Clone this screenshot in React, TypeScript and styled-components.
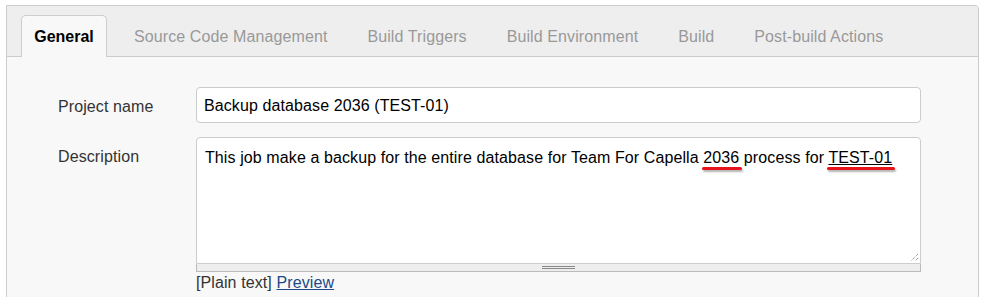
import React from "react";
import styled, { createGlobalStyle } from "styled-components";

const GlobalStyle = createGlobalStyle`
   html, body {
      margin: 0;
      padding: 0;
      background: #ffffff;
      font-family: "Liberation Sans", Arial, sans-serif;
      font-size: 16px;
      letter-spacing: 0.1px;
      color: #333;
   }
`;

const tabs = ["General", "Source Code Management", "Build Triggers", "Build Environment", "Build", "Post-build Actions"];

function App() {
   return (
      <>
         <GlobalStyle />
         <Panel>
            <TabBar>
               {tabs.map((item, index) => (
                  <Tab key={index} $active={index == 0}>
                     {item}
                  </Tab>
               ))}
            </TabBar>
            <Content>
               <FormGrid>
                  <Label>Project name</Label>
                  <TextInput>Backup database 2036 (TEST-01)</TextInput>

                  <Label $top>Description</Label>
                  <div>
                     <TextArea>
                        This job make a backup for the entire database for Team For Capella{" "}
                        <Misspelled>2036</Misspelled> process for{" "}
                        <Misspelled $underline>TEST-01</Misspelled>
                        <ResizeCorner width="9" height="9" viewBox="0 0 9 9">
                           <path d="M8 1 L1 8" stroke="#777" strokeWidth="1" strokeDasharray="1 1" />
                           <path d="M8 5 L5 8" stroke="#777" strokeWidth="1" strokeDasharray="1 1" />
                        </ResizeCorner>
                     </TextArea>
                     <Grip>
                        <GripLines />
                     </Grip>
                     <Hint>
                        [Plain text] <PreviewLink>Preview</PreviewLink>
                     </Hint>
                  </div>
               </FormGrid>
            </Content>
         </Panel>
      </>
   );
}

export default App;

const Panel = styled.div`
   margin: 5px 0 0 6px;
   width: 973px;
   box-sizing: border-box;
   border: 1px solid #cccccc;
   border-radius: 0 4px 0 0;
   background: #f8f8f8;
   height: 320px;
`;

const TabBar = styled.div`
   display: flex;
   align-items: flex-end;
   height: 51px;
   box-sizing: border-box;
   padding: 9px 0 0 14px;
   background: #eeeeee;
   border-bottom: 1px solid #cccccc;
   border-radius: 0 4px 0 0;
`;

const Tab = styled.div<{ $active?: boolean }>`
   height: 42px;
   box-sizing: border-box;
   margin-bottom: -1px;
   display: flex;
   align-items: center;
   justify-content: center;
   white-space: nowrap;
   font-size: 16px;
   padding: ${(p) => (p.$active ? "1px 0 0 0" : "1px 19px 0 19px")};
   width: ${(p) => (p.$active ? "86px" : "auto")};
   margin-right: ${(p) => (p.$active ? "7px" : "0")};
   color: ${(p) => (p.$active ? "#000000" : "#999999")};
   font-weight: ${(p) => (p.$active ? "bold" : "normal")};
   letter-spacing: ${(p) => (p.$active ? "0" : "0.1px")};
   background: ${(p) => (p.$active ? "#f8f8f8" : "transparent")};
   border: ${(p) => (p.$active ? "1px solid #cccccc" : "1px solid transparent")};
   border-bottom: none;
   border-radius: 5px 5px 0 0;
`;

const Content = styled.div`
   padding: 30px 57px 0 51px;
`;

const FormGrid = styled.div`
   display: grid;
   grid-template-columns: 138px 1fr;
   row-gap: 14px;
   align-items: start;
`;

const Label = styled.div<{ $top?: boolean }>`
   color: #333333;
   font-size: 16px;
   line-height: 18px;
   padding-top: 11px;
`;

const TextInput = styled.div`
   height: 36px;
   box-sizing: border-box;
   border: 1px solid #cccccc;
   border-radius: 4px;
   background: #ffffff;
   color: #000000;
   padding: 1px 7px 0 7px;
   display: flex;
   align-items: center;
   font-size: 16px;
`;

const TextArea = styled.div`
   position: relative;
   height: 127px;
   box-sizing: border-box;
   border: 1px solid #cccccc;
   border-radius: 4px 4px 0 0;
   background: #ffffff;
   color: #000000;
   padding: 10px 8px;
   font-size: 16px;
   line-height: 19px;
`;

const Misspelled = styled.span<{ $underline?: boolean }>`
   position: relative;
   text-decoration: ${(p) => (p.$underline ? "underline" : "none")};
   &::after {
      content: "";
      position: absolute;
      left: -1px;
      right: -3px;
      bottom: -4px;
      height: 3px;
      border-radius: 2px;
      background: #e8141b;
      box-shadow: 1px 2px 2px rgba(0, 0, 0, 0.3);
   }
`;

const ResizeCorner = styled.svg`
   position: absolute;
   right: 1px;
   bottom: 1px;
`;

const Grip = styled.div`
   height: 8px;
   box-sizing: border-box;
   background: #eeeeee;
   border: 1px solid #bbbbbb;
   border-top: none;
   display: flex;
   justify-content: center;
   align-items: center;
`;

const GripLines = styled.div`
   width: 33px;
   height: 3px;
   border-top: 1px solid #888888;
   border-bottom: 1px solid #888888;
   box-sizing: border-box;
`;

const Hint = styled.div`
   color: #333333;
   font-size: 16px;
   line-height: 18px;
   padding-top: 2px;
`;

const PreviewLink = styled.a`
   color: #204a87;
   text-decoration: underline;
   cursor: pointer;
`;
